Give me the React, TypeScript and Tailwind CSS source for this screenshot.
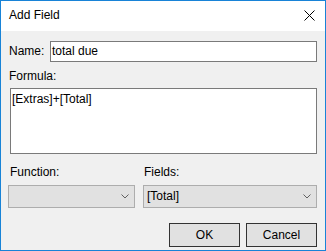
export default function App() {
  return (
    <div
      className="w-[326px] h-[251px] border border-[#1883d7] flex flex-col text-[12px] leading-[15px] text-black"
      style={{ fontFamily: '"Liberation Sans", Arial, sans-serif' }}
    >
      {/* title bar */}
      <div className="h-[30px] bg-white flex items-center justify-between pl-2 pr-[10px] shrink-0">
        <span className="-mt-[1px]">Add Field</span>
        <svg width="11" height="11" viewBox="0 0 11 11" className="-mt-[1px]">
          <path d="M0.5 0.5 L10.5 10.5 M10.5 0.5 L0.5 10.5" stroke="#000" strokeWidth="1" />
        </svg>
      </div>

      {/* body */}
      <div className="flex-1 bg-[#f0f0f0] px-2 pt-[10px] flex flex-col">
        <div className="flex items-center">
          <label className="w-[41px] shrink-0">Name:</label>
          <div className="flex-1 h-[21px] bg-white border border-[#7a7a7a] pl-[1px] flex items-center">
            total due
          </div>
        </div>

        <label className="mt-[7px]">Formula:</label>
        <div className="mt-[4px] ml-[1px] h-[66px] bg-white border border-[#7a7a7a] pl-[1px] pt-[3px]">
          [Extras]+[Total]
        </div>

        <div className="mt-[11px] flex gap-2">
          <div className="w-[127px] -ml-[1px] flex flex-col">
            <label className="pl-[2px]">Function:</label>
            <div className="mt-[5px] h-[23px] bg-[#e1e1e1] border border-[#adadad] flex items-center justify-end pr-[5px]">
              <svg width="8" height="5" viewBox="0 0 8 5">
                <polyline points="0.5,0.5 4,4 7.5,0.5" fill="none" stroke="#606060" strokeWidth="1" />
              </svg>
            </div>
          </div>
          <div className="flex-1 flex flex-col">
            <label className="pl-[1px]">Fields:</label>
            <div className="mt-[5px] h-[23px] bg-[#e1e1e1] border border-[#adadad] flex items-center justify-between pl-[3px] pr-[5px]">
              <span>[Total]</span>
              <svg width="8" height="5" viewBox="0 0 8 5">
                <polyline points="0.5,0.5 4,4 7.5,0.5" fill="none" stroke="#606060" strokeWidth="1" />
              </svg>
            </div>
          </div>
        </div>

        <div className="mt-[15px] flex justify-end gap-[6px]">
          <button className="w-[71px] h-[24px] bg-[#e1e1e1] border border-[#333333] flex items-center justify-center">
            OK
          </button>
          <button className="w-[71px] h-[24px] bg-[#e1e1e1] border border-[#333333] flex items-center justify-center">
            Cancel
          </button>
        </div>
      </div>
    </div>
  );
}
